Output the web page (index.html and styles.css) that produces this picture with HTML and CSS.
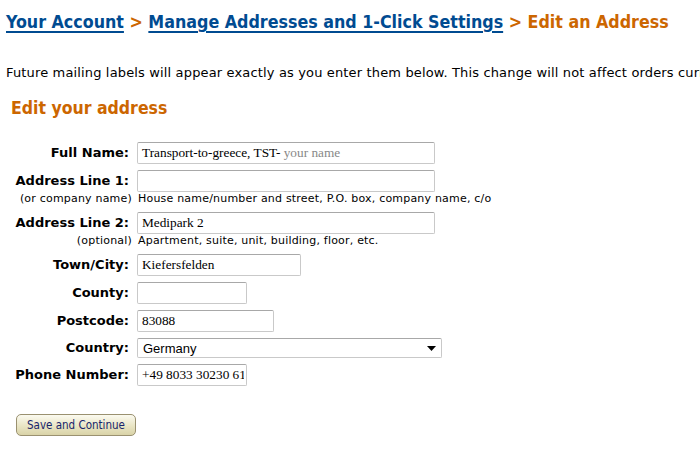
FILE: index.html
```html
<!DOCTYPE html>
<html lang="en">
<head>
    <meta charset="UTF-8">
    <title>Edit an Address</title>
    <link rel="stylesheet" href="styles.css">
</head>
<body>
    <h1 class="crumbs">
        <a href="#">Your Account</a> &gt; <a href="#">Manage Addresses and 1-Click Settings</a> &gt; Edit an Address
    </h1>

    <p class="intro">Future mailing labels will appear exactly as you enter them below. This change will not affect orders currently in progress.</p>

    <h2 class="section-title">Edit your address</h2>

    <form class="address-form">
        <table class="fields">
            <tr>
                <th>Full Name:</th>
                <td><div class="fake-input wide"><span>Transport-to-greece, TST-</span> <span class="ghost">your name</span></div></td>
            </tr>
            <tr class="with-hint">
                <th>Address Line 1:<small>(or company name)</small></th>
                <td><input type="text" class="wide"><small>House name/number and street, P.O. box, company name, c/o</small></td>
            </tr>
            <tr class="with-hint">
                <th>Address Line 2:<small>(optional)</small></th>
                <td><input type="text" class="wide" value="Medipark 2"><small>Apartment, suite, unit, building, floor, etc.</small></td>
            </tr>
            <tr>
                <th>Town/City:</th>
                <td><input type="text" class="town" value="Kiefersfelden"></td>
            </tr>
            <tr>
                <th>County:</th>
                <td><input type="text" class="short"></td>
            </tr>
            <tr>
                <th>Postcode:</th>
                <td><input type="text" class="postcode" value="83088"></td>
            </tr>
            <tr class="select-row">
                <th>Country:</th>
                <td>
                    <div class="select">
                        <span>Germany</span>
                        <svg width="9" height="5" viewBox="0 0 9 5"><path d="M0 0h9L4.5 5z" fill="#000"/></svg>
                    </div>
                </td>
            </tr>
            <tr>
                <th>Phone Number:</th>
                <td><input type="text" class="short" value="+49 8033 30230 61"></td>
            </tr>
        </table>

        <button type="button" class="save-btn">Save and Continue</button>
    </form>
</body>
</html>
```

FILE: styles.css
```css
body {
    margin: 0;
    padding: 0 6px;
    font-family: "DejaVu Sans", Verdana, sans-serif;
    color: #000;
    background: #fff;
    overflow: hidden;
}

.crumbs {
    margin: 11px 0 0;
    font-family: "DejaVu Sans Condensed", "DejaVu Sans", sans-serif;
    font-stretch: condensed;
    font-size: 17.7px;
    font-weight: bold;
    line-height: 22px;
    color: #cc6600;
    white-space: nowrap;
}

.crumbs a {
    color: #004b91;
    text-decoration: underline;
    text-underline-offset: 3px;
    text-decoration-thickness: 2px;
}

.intro {
    margin: 32px 0 0;
    font-size: 13px;
    letter-spacing: 0.15px;
    line-height: 16px;
    white-space: nowrap;
}

.section-title {
    margin: 16px 0 0 5px;
    font-family: "DejaVu Sans Condensed", "DejaVu Sans", sans-serif;
    font-stretch: condensed;
    font-size: 17.5px;
    line-height: 22px;
    color: #cc6600;
}

.address-form {
    margin-top: 20px;
}

.fields {
    border-collapse: collapse;
}

.fields th {
    width: 123px;
    padding: 3px 7px 3px 0;
    text-align: right;
    font-size: 13px;
    font-weight: bold;
    white-space: nowrap;
    vertical-align: top;
    line-height: 22px;
}

.fields td {
    padding: 3px 0 3px 1px;
    vertical-align: top;
}

.fields small {
    display: block;
    font-size: 11px;
    letter-spacing: 0.2px;
    font-weight: normal;
    line-height: 14px;
    white-space: nowrap;
}

.fields th small {
    margin-right: -3px;
}

.fields td small {
    margin-left: 1px;
}

.select-row th {
    line-height: 20px;
}

input,
.fake-input {
    box-sizing: border-box;
    display: block;
    height: 22px;
    margin: 0;
    padding: 1px 2px 1px 4px;
    border: 1px solid #c9c9c9;
    border-top-color: #a8a8a8;
    border-radius: 2px;
    font-family: "Liberation Serif", "Times New Roman", serif;
    font-size: 13.3px;
    color: #000;
    background: #fff;
}

.fake-input {
    line-height: 18px;
    white-space: nowrap;
}

.fake-input .ghost {
    color: #888;
}

.wide {
    width: 298px;
}

.town {
    width: 164px;
}

.short {
    width: 110px;
}

.postcode {
    width: 137px;
}

.select {
    box-sizing: border-box;
    display: flex;
    align-items: center;
    justify-content: space-between;
    width: 305px;
    height: 20px;
    padding: 0 5px 0 5px;
    border: 1px solid #c9c9c9;
    border-top-color: #a8a8a8;
    border-radius: 2px;
    font-family: "Liberation Sans", Arial, sans-serif;
    font-size: 13px;
}

.save-btn {
    display: block;
    margin: 25px 0 0 10px;
    width: 120px;
    height: 22px;
    padding: 0;
    border: 1px solid #9a9170;
    border-radius: 5px;
    background: linear-gradient(#fbfaf0, #e9e5c4 55%, #d9d3a8);
    font-family: "DejaVu Sans Condensed", "DejaVu Sans", sans-serif;
    font-stretch: condensed;
    font-size: 11.5px;
    color: #17246b;
    cursor: pointer;
}
```
